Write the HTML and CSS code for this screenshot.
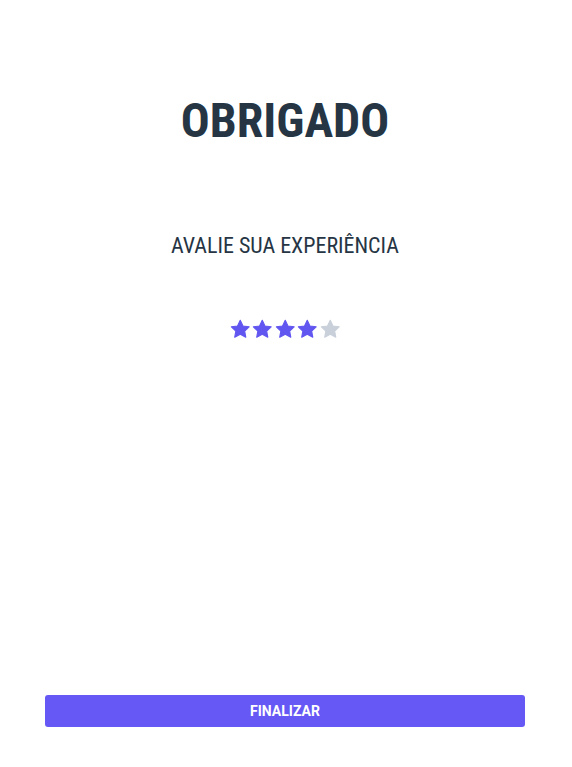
FILE: index.html
```html
<!DOCTYPE html>
<html lang="pt">
<head>
<meta charset="utf-8">
<link rel="stylesheet" href="styles.css">
</head>
<body>
<main class="screen">
  <h1 class="title">OBRIGADO</h1>
  <p class="subtitle">AVALIE SUA EXPERIÊNCIA</p>
  <div class="stars">
    <svg class="star on" viewBox="0 0 24 24"><path d="M12 2.5l2.9 6 6.6.9-4.8 4.6 1.2 6.5L12 17.3l-5.9 3.2 1.2-6.5-4.8-4.6 6.6-.9z"/></svg>
    <svg class="star on" viewBox="0 0 24 24"><path d="M12 2.5l2.9 6 6.6.9-4.8 4.6 1.2 6.5L12 17.3l-5.9 3.2 1.2-6.5-4.8-4.6 6.6-.9z"/></svg>
    <svg class="star on" viewBox="0 0 24 24"><path d="M12 2.5l2.9 6 6.6.9-4.8 4.6 1.2 6.5L12 17.3l-5.9 3.2 1.2-6.5-4.8-4.6 6.6-.9z"/></svg>
    <svg class="star on" viewBox="0 0 24 24"><path d="M12 2.5l2.9 6 6.6.9-4.8 4.6 1.2 6.5L12 17.3l-5.9 3.2 1.2-6.5-4.8-4.6 6.6-.9z"/></svg>
    <svg class="star off" viewBox="0 0 24 24"><path d="M12 2.5l2.9 6 6.6.9-4.8 4.6 1.2 6.5L12 17.3l-5.9 3.2 1.2-6.5-4.8-4.6 6.6-.9z"/></svg>
  </div>
  <div class="spacer"></div>
  <button class="finish">FINALIZAR</button>
</main>
</body>
</html>
```
FILE: styles.css
```css
html, body {
  margin: 0;
  padding: 0;
  background: #ffffff;
}
.screen {
  height: 767px;
  box-sizing: border-box;
  display: flex;
  flex-direction: column;
  align-items: center;
  padding: 0 47px 40px 45px;
}
.title {
  margin: 93px 0 0;
  font-family: Roboto, sans-serif;
  font-stretch: 80%;
  font-weight: 700;
  font-size: 48px;
  line-height: 56px;
  color: #263544;
}
.subtitle {
  margin: 84px 0 0;
  font-family: Roboto, sans-serif;
  font-stretch: 85%;
  font-size: 22px;
  line-height: 26px;
  color: #263544;
}
.stars {
  margin-top: 59px;
  display: flex;
  gap: 0;
}
.star {
  width: 22.5px;
  height: 22.5px;
  stroke-linejoin: round;
  stroke-width: 1.2;
}
.star.on { fill: #6156f0; stroke: #6156f0; }
.star.off { fill: #c9d0da; stroke: #c9d0da; }
.spacer { flex: 1; }
.finish {
  align-self: stretch;
  height: 32px;
  padding: 0;
  border: none;
  border-radius: 3px;
  background: #6558f5;
  color: #ffffff;
  font-family: Roboto, sans-serif;
  font-weight: 700;
  font-size: 14px;
}
```
